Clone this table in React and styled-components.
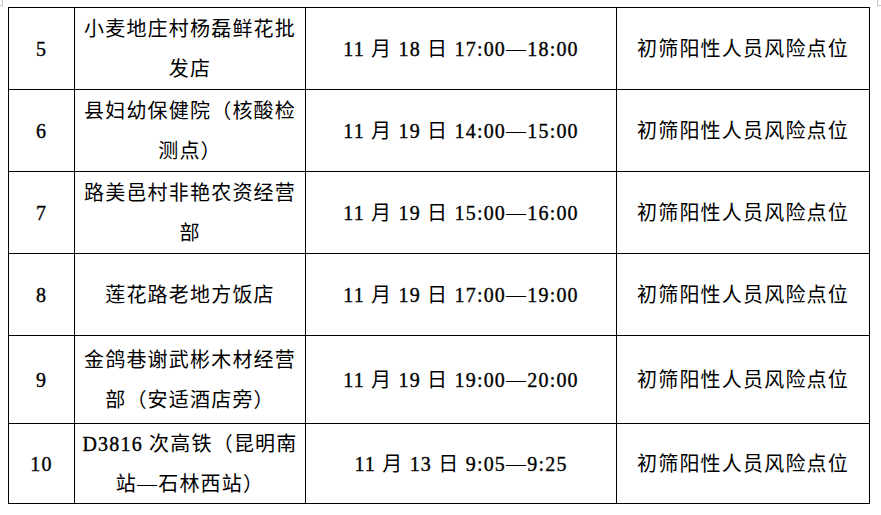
import React from "react";
import styled, { createGlobalStyle } from "styled-components";

const GlobalStyle = createGlobalStyle`
  html, body {
    margin: 0;
    padding: 0;
    background: #ffffff;
  }
`;

const Page = styled.div`
  position: relative;
  width: 881px;
  height: 515px;
  background: #ffffff;
  overflow: hidden;
`;

const CornerMark = styled.div`
  position: absolute;
  top: 0;
  width: 4px;
  height: 5px;
  border-bottom: 1px solid #c4c4c4;

  ${(props) =>
    props.$side === "left"
      ? `
    left: -2px;
    border-right: 1px solid #c4c4c4;
  `
      : `
    left: 877px;
    border-left: 1px solid #c4c4c4;
  `}
`;

const Table = styled.div`
  display: grid;
  grid-template-columns: 65px 230px 310px 252px;
  grid-template-rows: 81px 81px 81px 81px 87px 79px;
  gap: 1px;
  padding: 1px;
  margin: 7px 0 0 8px;
  width: fit-content;
  background-color: #000000;
`;

const Cell = styled.div`
  display: flex;
  align-items: center;
  justify-content: center;
  background-color: #ffffff;
  color: #000000;
  font-family: "Liberation Serif", "Noto Sans CJK SC", serif;
  font-size: 20px;
  line-height: 40px;
  letter-spacing: 1.2px;
  text-align: center;
  white-space: nowrap;
`;

const Lines = styled.span`
  display: block;
`;

const Line = styled.span`
  display: block;
`;

// latin runs (digits, colons) are a touch heavier in the scan
const Latin = styled.span`
  -webkit-text-stroke: 0.35px #000000;
`;

const withLatin = (text) =>
  text.split(/([A-Za-z0-9:]+)/).map((part, i) =>
    /^[A-Za-z0-9:]+$/.test(part) ? <Latin key={i}>{part}</Latin> : part
  );

const rows = [
  {
    no: "5",
    place: ["小麦地庄村杨磊鲜花批", "发店"],
    time: "11 月 18 日 17:00—18:00",
  },
  {
    no: "6",
    place: ["县妇幼保健院（核酸检", "测点）"],
    time: "11 月 19 日 14:00—15:00",
  },
  {
    no: "7",
    place: ["路美邑村非艳农资经营", "部"],
    time: "11 月 19 日 15:00—16:00",
  },
  {
    no: "8",
    place: ["莲花路老地方饭店"],
    time: "11 月 19 日 17:00—19:00",
  },
  {
    no: "9",
    place: ["金鸽巷谢武彬木材经营", "部（安适酒店旁）"],
    time: "11 月 19 日 19:00—20:00",
  },
  {
    no: "10",
    place: ["D3816 次高铁（昆明南", "站—石林西站）"],
    time: "11 月 13 日 9:05—9:25",
  },
];

function App() {
  return (
    <Page>
      <GlobalStyle />
      <CornerMark $side="left" />
      <CornerMark $side="right" />
      <Table>
        {rows.map((row) => (
          <React.Fragment key={row.no}>
            <Cell>
              <Lines>{withLatin(row.no)}</Lines>
            </Cell>
            <Cell>
              <Lines>
                {row.place.map((line) => (
                  <Line key={line}>{withLatin(line)}</Line>
                ))}
              </Lines>
            </Cell>
            <Cell>
              <Lines>{withLatin(row.time)}</Lines>
            </Cell>
            <Cell>
              <Lines>初筛阳性人员风险点位</Lines>
            </Cell>
          </React.Fragment>
        ))}
      </Table>
    </Page>
  );
}

export default App;
